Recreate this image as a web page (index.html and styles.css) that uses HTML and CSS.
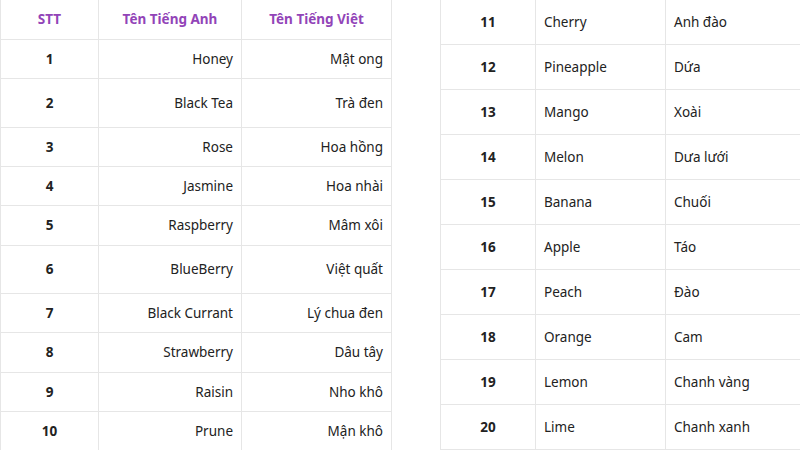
FILE: index.html
```html
<!DOCTYPE html>
<html lang="vi">
<head>
<meta charset="utf-8">
<title>Bảng tên trái cây</title>
<link rel="stylesheet" href="styles.css">
</head>
<body>
<div class="page">
  <table class="tbl tbl-left">
    <colgroup><col class="c-stt"><col class="c-en"><col class="c-vi"></colgroup>
    <thead>
      <tr class="h39"><th>STT</th><th>Tên Tiếng Anh</th><th>Tên Tiếng Việt</th></tr>
    </thead>
    <tbody>
      <tr class="h39"><td class="num">1</td><td>Honey</td><td>Mật ong</td></tr>
      <tr class="h49"><td class="num">2</td><td>Black Tea</td><td>Trà đen</td></tr>
      <tr class="h39"><td class="num">3</td><td>Rose</td><td>Hoa hồng</td></tr>
      <tr class="h39"><td class="num">4</td><td>Jasmine</td><td>Hoa nhài</td></tr>
      <tr class="h40"><td class="num">5</td><td>Raspberry</td><td>Mâm xôi</td></tr>
      <tr class="h48"><td class="num">6</td><td>BlueBerry</td><td>Việt quất</td></tr>
      <tr class="h39"><td class="num">7</td><td>Black Currant</td><td>Lý chua đen</td></tr>
      <tr class="h40"><td class="num">8</td><td>Strawberry</td><td>Dâu tây</td></tr>
      <tr class="h39"><td class="num">9</td><td>Raisin</td><td>Nho khô</td></tr>
      <tr class="h39"><td class="num">10</td><td>Prune</td><td>Mận khô</td></tr>
    </tbody>
  </table>
  <table class="tbl tbl-right">
    <colgroup><col class="r-stt"><col class="r-en"><col class="r-vi"></colgroup>
    <tbody>
      <tr class="first"><td class="num">11</td><td>Cherry</td><td>Anh đào</td></tr>
      <tr><td class="num">12</td><td>Pineapple</td><td>Dứa</td></tr>
      <tr><td class="num">13</td><td>Mango</td><td>Xoài</td></tr>
      <tr><td class="num">14</td><td>Melon</td><td>Dưa lưới</td></tr>
      <tr><td class="num">15</td><td>Banana</td><td>Chuối</td></tr>
      <tr><td class="num">16</td><td>Apple</td><td>Táo</td></tr>
      <tr><td class="num">17</td><td>Peach</td><td>Đào</td></tr>
      <tr><td class="num">18</td><td>Orange</td><td>Cam</td></tr>
      <tr><td class="num">19</td><td>Lemon</td><td>Chanh vàng</td></tr>
      <tr><td class="num">20</td><td>Lime</td><td>Chanh xanh</td></tr>
    </tbody>
  </table>
</div>
</body>
</html>
```

FILE: styles.css
```css
html, body {
  margin: 0;
  padding: 0;
  background: #ffffff;
}
body {
  font-family: "Noto Sans", "Open Sans", "DejaVu Sans", sans-serif;
  font-size: 13.5px;
  color: #222222;
  width: 800px;
  height: 450px;
  overflow: hidden;
}
.page {
  display: flex;
  align-items: flex-start;
  gap: 48px;
  width: 800px;
  height: 450px;
}
.tbl {
  border-collapse: collapse;
  table-layout: fixed;
}
.tbl td, .tbl th {
  border: 1px solid #e6e6e6;
  padding: 0 8px;
  white-space: nowrap;
  line-height: 20px;
}
.tbl tr:first-child td, .tbl tr:first-child th {
  border-top: none;
}
.tbl-left {
  width: 391px;
}
.c-stt { width: 98px; }
.c-en { width: 143px; }
.c-vi { width: 150px; }
.tbl-left th {
  color: #9244b8;
  font-weight: 700;
  text-align: center;
}
.tbl-left td {
  text-align: right;
}
.tbl .num {
  text-align: center;
  font-weight: 700;
}
.h39 { height: 39px; }
.h40 { height: 40px; }
.h48 { height: 48px; }
.h49 { height: 49px; }
.tbl-right {
  width: 360px;
}
.r-stt { width: 95px; }
.r-en { width: 130px; }
.r-vi { width: 135px; }
.tbl-right tr { height: 45px; }
.tbl-right tr.first { height: 44px; }
.tbl-right td {
  text-align: left;
}
```
